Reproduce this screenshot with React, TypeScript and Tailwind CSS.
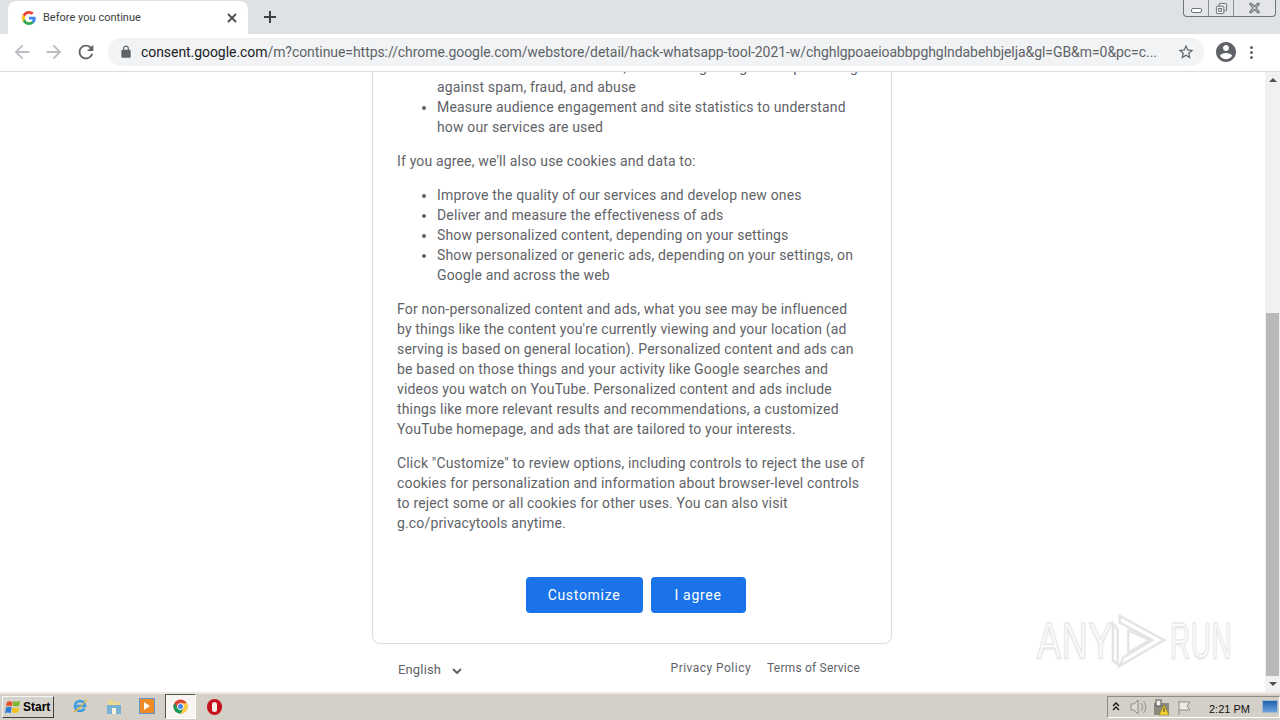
import React from "react";

const Icon = ({ d, className }: { d: string; className: string }) => (
  <svg viewBox="0 0 24 24" fill="currentColor" className={className}>
    <path d={d} />
  </svg>
);

const icons = {
  back: "M20 11H7.83l5.59-5.59L12 4l-8 8 8 8 1.41-1.41L7.83 13H20v-2z",
  forward: "M12 4l-1.41 1.41L16.17 11H4v2h12.17l-5.58 5.59L12 20l8-8z",
  reload:
    "M17.65 6.35A7.958 7.958 0 0 0 12 4c-4.42 0-7.99 3.58-7.99 8s3.57 8 7.99 8c3.73 0 6.84-2.55 7.73-6h-2.08A5.99 5.99 0 0 1 12 18c-3.31 0-6-2.69-6-6s2.69-6 6-6c1.66 0 3.14.69 4.22 1.78L13 11h7V4l-2.35 2.35z",
  lock: "M18 8h-1V6c0-2.76-2.24-5-5-5S7 3.24 7 6v2H6c-1.1 0-2 .9-2 2v10c0 1.1.9 2 2 2h12c1.1 0 2-.9 2-2V10c0-1.1-.9-2-2-2zM9 6c0-1.66 1.34-3 3-3s3 1.34 3 3v2H9V6z",
  star: "M22 9.24l-7.19-.62L12 2 9.19 8.63 2 9.24l5.46 4.73L5.82 21 12 17.27 18.18 21l-1.63-7.03L22 9.24zM12 15.4l-3.76 2.27 1-4.28-3.32-2.88 4.38-.38L12 6.1l1.71 4.04 4.38.38-3.32 2.88 1 4.28L12 15.4z",
  account:
    "M12 2C6.48 2 2 6.48 2 12s4.48 10 10 10 10-4.48 10-10S17.52 2 12 2zm0 3c1.66 0 3 1.34 3 3s-1.34 3-3 3-3-1.34-3-3 1.34-3 3-3zm0 14.2c-2.5 0-4.71-1.28-6-3.22.03-1.99 4-3.08 6-3.08 1.99 0 5.97 1.09 6 3.08-1.29 1.94-3.5 3.22-6 3.22z",
};

const GoogleG = () => (
  <svg viewBox="0 0 48 48" className="w-[14px] h-[14px] shrink-0">
    <path fill="#EA4335" d="M24 9.5c3.5 0 6.7 1.2 9.2 3.6l6.9-6.9C35.9 2.4 30.5 0 24 0 14.6 0 6.5 5.4 2.6 13.2l8 6.2C12.5 13.7 17.8 9.5 24 9.5z" />
    <path fill="#4285F4" d="M47 24.5c0-1.6-.1-3.1-.4-4.5H24v9h13c-.6 3-2.3 5.5-4.8 7.2l7.7 6C44.4 38 47 31.8 47 24.5z" />
    <path fill="#FBBC05" d="M10.6 28.6A14.5 14.5 0 0 1 9.8 24c0-1.6.3-3.2.8-4.6l-8-6.2A24 24 0 0 0 0 24c0 3.9.9 7.5 2.6 10.8l8-6.2z" />
    <path fill="#34A853" d="M24 48c6.5 0 11.9-2.1 15.9-5.8l-7.7-6c-2.2 1.4-4.9 2.3-8.2 2.3-6.2 0-11.5-4.2-13.4-9.9l-8 6.2C6.5 42.6 14.6 48 24 48z" />
  </svg>
);

const Browser = () => (
  <>
    <div className="relative h-[34px] bg-[#dee1e6] flex items-end pl-2 shrink-0">
      <div className="w-[240px] h-[33px] bg-white rounded-t-lg flex items-center pl-[14px] pr-[11px]">
        <GoogleG />
        <span className="ml-[7px] mt-[2px] flex-1 text-[11px] tracking-[0.02px] text-[#3c4043] font-['Roboto',sans-serif]">Before you continue</span>
        <svg viewBox="0 0 10 10" className="w-[10px] h-[10px] text-[#4a4d51]" stroke="currentColor" strokeWidth="1.8">
          <path d="M1 1l8 8M9 1l-8 8" />
        </svg>
      </div>
      <svg viewBox="0 0 14 14" className="w-[14px] h-[14px] ml-[15px] mb-[10px] text-[#3c4043]" stroke="currentColor" strokeWidth="2">
        <path d="M7 1v12M1 7h12" />
      </svg>
      <div className="absolute top-0 left-[1183px] w-[93px] h-[17px] flex border border-t-0 border-[#6f7479] rounded-b bg-[#e3e5ea]">
        <div className="w-[25px] flex items-center justify-center border-r border-[#8a8f94]">
          <div className="w-[11px] h-[5px] mt-1 border border-[#6f7479] rounded-[2px] bg-white" />
        </div>
        <div className="w-[25px] flex items-center justify-center border-r border-[#8a8f94]">
          <svg viewBox="0 0 14 14" className="w-[13px] h-[13px]" fill="none" stroke="#63686d">
            <rect x="4.5" y="1.5" width="8" height="8" rx="1" />
            <rect x="1.5" y="4.5" width="8" height="8" rx="1" fill="#eef0f3" />
            <rect x="4" y="7" width="3" height="3" />
          </svg>
        </div>
        <div className="flex-1 flex items-center justify-center">
          <svg viewBox="0 0 12 12" className="w-[13px] h-[12px]" fill="none" stroke="#777c81" strokeWidth="1.3">
            <path d="M1.5 1.5H3L6 4.5l3-3h1.5v1L7.5 6l3 3.5v1H9L6 7.5l-3 3H1.5v-1L4.5 6l-3-3.5z" />
          </svg>
        </div>
      </div>
    </div>
    <div className="h-[38px] bg-white border-b border-[#dadce0] pb-px flex items-center shrink-0">
      <Icon d={icons.back} className="w-[22px] h-[22px] ml-[11px] text-[#b9bcc0]" />
      <Icon d={icons.forward} className="w-[22px] h-[22px] ml-[10px] text-[#b9bcc0]" />
      <Icon d={icons.reload} className="w-[22px] h-[22px] ml-[10px] text-[#5f6368]" />
      <div className="ml-[11px] w-[1096px] h-[28px] rounded-full bg-[#f1f3f4] flex items-center pl-[11px] pr-[8px]">
        <Icon d={icons.lock} className="w-[14px] h-[14px] text-[#5f6368] shrink-0" />
        <div className="ml-[8px] w-[1018px] text-[14px] tracking-[-0.06px] text-[#5f6368] whitespace-nowrap font-['Roboto',sans-serif]">
          <span className="text-[#202124]">consent.google.com</span>
          /m?continue=https://chrome.google.com/webstore/detail/hack-whatsapp-tool-2021-w/chghlgpoaeioabbpghglndabehbjelja&amp;gl=GB&amp;m=0&amp;pc=c...
        </div>
        <Icon d={icons.star} className="w-[18px] h-[18px] ml-[18px] text-[#5f6368] shrink-0" />
      </div>
      <Icon d={icons.account} className="w-[24px] h-[24px] ml-[10px] text-[#5f6368]" />
      <div className="ml-[12px] flex flex-col gap-[2px]">
        <div className="w-[3px] h-[3px] rounded-full bg-[#5f6368]" />
        <div className="w-[3px] h-[3px] rounded-full bg-[#5f6368]" />
        <div className="w-[3px] h-[3px] rounded-full bg-[#5f6368]" />
      </div>
    </div>
  </>
);

const Consent = () => (
  <div className="flex-1 min-w-0 overflow-hidden font-['Roboto',sans-serif] text-[14px] leading-5 tracking-[0.16px] text-[#5f6368]">
    <div className="w-[520px] ml-[372px] -mt-[15px]">
      <div className="border border-[#dadce0] border-t-0 rounded-b-lg pl-6 pr-6 pb-[30px]">
        <ul className="list-disc pl-10 marker:text-[#5f6368]">
          <li>Deliver and maintain services, like tracking outages and protecting against spam, fraud, and abuse</li>
          <li>Measure audience engagement and site statistics to understand how our services are used</li>
        </ul>
        <p className="mt-[14px]">If you agree, we'll also use cookies and data to:</p>
        <ul className="list-disc pl-10 mt-[14px]">
          <li>Improve the quality of our services and develop new ones</li>
          <li>Deliver and measure the effectiveness of ads</li>
          <li>Show personalized content, depending on your settings</li>
          <li>Show personalized or generic ads, depending on your settings, on Google and across the web</li>
        </ul>
        <p className="mt-[14px]">
          For non-personalized content and ads, what you see may be influenced<br />
          by things like the content you're currently viewing and your location (ad serving is based on general location). Personalized content and ads can be based on those things and your activity like Google searches and videos you watch on YouTube. Personalized content and ads include things like more relevant results and recommendations, a customized YouTube homepage, and ads that are tailored to your interests.
        </p>
        <p className="mt-[14px]">
          Click "Customize" to review options, including controls to reject the use of cookies for personalization and information about browser-level controls to reject some or all cookies for other uses. You can also visit g.co/privacytools anytime.
        </p>
        <div className="mt-[44px] flex justify-center gap-2 pl-[7px]">
          <button className="w-[117px] h-9 rounded bg-[#1a73e8] text-white font-normal tracking-[0.7px]">Customize</button>
          <button className="w-[95px] h-9 rounded bg-[#1a73e8] text-white font-normal tracking-[0.7px]">I agree</button>
        </div>
      </div>
      <div className="flex items-center h-[48px] pl-[26px] pr-[32px] text-[12px]">
        <div className="flex items-center mt-[4px]">
          <span className="text-[13px] tracking-[0.15px]">English</span>
          <svg viewBox="0 0 10 6" className="w-[10px] h-[6px] ml-[11px] mt-[2px]" fill="none" stroke="#5f6368" strokeWidth="2">
            <path d="M1 1l4 4 4-4" />
          </svg>
        </div>
        <div className="ml-auto flex gap-4">
          <span className="tracking-[0.47px]">Privacy Policy</span>
          <span className="tracking-[0.2px]">Terms of Service</span>
        </div>
      </div>
    </div>
  </div>
);

const Scrollbar = () => (
  <div className="w-[15px] bg-[#f1f1f1] flex flex-col shrink-0">
    <div className="h-4 flex items-center justify-center">
      <div className="w-0 h-0 border-x-[4px] border-x-transparent border-b-[4px] border-b-[#505050]" />
    </div>
    <div className="flex-1 flex flex-col justify-end">
      <div className="h-[363px] mx-[1px] bg-[#b9b9b9]" />
    </div>
    <div className="h-4 flex items-center justify-center">
      <div className="w-0 h-0 border-x-[4px] border-x-transparent border-t-[4px] border-t-[#505050]" />
    </div>
  </div>
);

const Watermark = () => (
  <div className="absolute left-[1037px] top-[610px] w-[195px] h-[62px] flex items-center font-['Liberation_Sans',sans-serif] text-[50px] leading-none whitespace-nowrap text-[#fbfbfb] [-webkit-text-stroke:1px_#e2e2e2] [text-shadow:0_2px_3px_#eeeeee] pointer-events-none">
    <span className="inline-block w-[68px] scale-x-[0.72] origin-left tracking-[1px]">ANY</span>
    <svg viewBox="0 0 60 62" className="w-[58px] h-[62px] ml-[3px] shrink-0" fill="none" stroke="#e4e4e4" strokeWidth="2.5">
      <path d="M5 13v38l5 4V19z" />
      <path d="M12 5l46 25-46 27 4-9 30-18-34-18z" />
      <path d="M21 20l22 10-22 13z" />
    </svg>
    <span className="inline-block w-[62px] ml-[4px] scale-x-[0.56] origin-left tracking-[1px]">RUN</span>
  </div>
);

const Taskbar = () => (
  <div className="h-7 shrink-0 bg-[#d4d0c8] border-t-2 border-t-[#ece9e0] flex items-center relative font-['Liberation_Sans',sans-serif]">
    <div className="ml-[2px] w-[52px] h-[22px] bg-[#d6d3cc] border border-[#f5f5f5] border-r-[#404040] border-b-[#404040] flex items-center pl-[2px] gap-[1px]">
      <svg viewBox="0 0 18 16" className="w-[17px] h-[15px] shrink-0">
        <path fill="#e8522a" d="M2 2c2-1 4-1 6 0L7 7C5 6 3 6 1 7z" />
        <path fill="#7cb82f" d="M9 1c2 1 4 1 7 0l-1 5c-2 1-5 1-7 0z" />
        <path fill="#2f7fd6" d="M1 8c2-1 4-1 6 0l-1 6c-2-1-4-1-6 0z" />
        <path fill="#f4c21a" d="M8 8c2 1 5 1 7 0l-1 5c-2 1-5 1-7 0z" />
      </svg>
      <span className="text-[12px] font-bold text-black">Start</span>
    </div>
    <svg viewBox="0 0 18 18" className="absolute left-[71px] top-[3px] w-[18px] h-[18px]" fill="none">
      <path d="M4 9h10c0-3-2-5-5-5S4 6 4 9c0 3 2 5 5 5 2 0 3.5-1 4.5-2.5" stroke="#3b9be0" strokeWidth="2.5" />
      <path d="M2 15C6 14 13 7 16 2" stroke="#e3b23a" strokeWidth="1.2" />
    </svg>
    <svg viewBox="0 0 16 18" className="absolute left-[106px] top-[3px] w-4 h-[18px]">
      <path fill="#ecd88f" d="M2 3h5l1 2h6v12H2z" />
      <path fill="#78b3d6" d="M1 8h14v9H1z" />
      <path fill="#f5f2e0" d="M6 11h4v6H6z" />
    </svg>
    <div className="absolute left-[139px] top-[4px] w-4 h-4 bg-[#f08a24] border border-[#5c94cf] flex items-center justify-center">
      <div className="w-0 h-0 border-y-[4px] border-y-transparent border-l-[6px] border-l-white" />
    </div>
    <div className="absolute left-[165px] top-0 w-[31px] h-[25px] bg-[#f6f5f1] border border-[#57544e] border-r-white border-b-white flex items-center justify-center">
      <svg viewBox="0 0 16 16" className="w-[15px] h-[15px]">
        <circle cx="8" cy="8" r="7.5" fill="#db4437" />
        <path fill="#0f9d58" d="M1.5 4.3A7.5 7.5 0 0 0 8 15.5l3-5H5z" />
        <path fill="#ffcd40" d="M8 4.5h6.7A7.5 7.5 0 0 1 8 15.5l3.3-5.5z" />
        <circle cx="8" cy="8" r="3.6" fill="#fff" />
        <circle cx="8" cy="8" r="2.7" fill="#4285f4" />
      </svg>
    </div>
    <div className="absolute left-[207px] top-[5px] w-[15px] h-4 rounded-full bg-[#c4131c] flex items-center justify-center">
      <div className="w-[5px] h-[10px] rounded-full bg-[#f4f0ec]" />
    </div>
    <div className="ml-auto w-[173px] h-[22px] flex items-center border border-[#8f8c85] border-r-white border-b-white relative">
      <svg viewBox="0 0 8 9" className="absolute left-[4px] top-[5px] w-2 h-[9px]" fill="none" stroke="#111" strokeWidth="1.3">
        <path d="M1 4l3-3 3 3M1 8l3-3 3 3" />
      </svg>
      <svg viewBox="0 0 18 16" className="absolute left-[22px] top-[2px] w-[18px] h-4" fill="none" stroke="#8d8d88">
        <path d="M1 5h3l4-4v14l-4-4H1z" fill="#dcdad5" />
        <path d="M11 4c2 2 2 6 0 8M13.5 2c3 3 3 9 0 12" />
      </svg>
      <svg viewBox="0 0 18 17" className="absolute left-[45px] top-[2px] w-[18px] h-[17px]">
        <rect x="1" y="4" width="15" height="12" fill="#8b887c" />
        <rect x="3" y="1" width="5" height="6" fill="#eee" stroke="#555" />
        <path fill="#f5d131" stroke="#7a6a10" strokeWidth=".5" d="M11 6l5 10H6z" />
        <rect x="10.5" y="9" width="1" height="4" fill="#333" />
      </svg>
      <svg viewBox="0 0 16 16" className="absolute left-[69px] top-[3px] w-4 h-4" fill="#ecebe6" stroke="#8d8d88">
        <path d="M2 1v14M2 2h11l-3 4 3 4H2" />
      </svg>
      <span className="absolute left-[101px] top-[4px] text-[11px] text-[#111]">2:21 PM</span>
      <div className="absolute right-[1px] top-[3px] w-4 h-[13px] bg-gradient-to-b from-[#1f5fae] to-[#6ba3da] border border-[#a3b8cc]" />
    </div>
  </div>
);

export default function App() {
  return (
    <div className="w-[1280px] h-[720px] flex flex-col overflow-hidden bg-white relative">
      <Browser />
      <div className="flex-1 min-h-0 flex">
        <Consent />
        <Scrollbar />
      </div>
      <Watermark />
      <Taskbar />
    </div>
  );
}
